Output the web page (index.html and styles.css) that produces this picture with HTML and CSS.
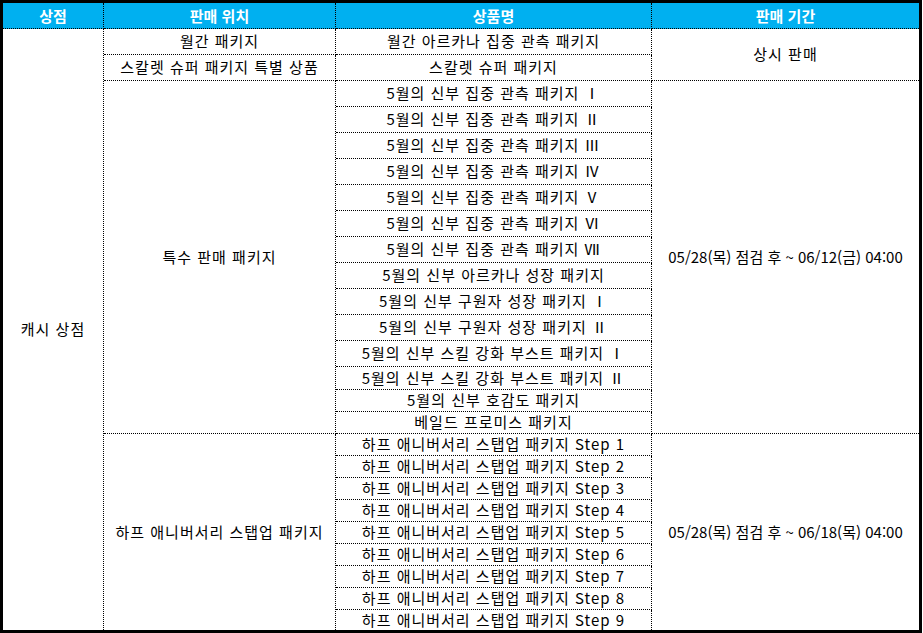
FILE: index.html
```html
<!DOCTYPE html>
<html lang="ko">
<head>
<meta charset="utf-8">
<title>판매 목록</title>
<link rel="stylesheet" href="styles.css">
</head>
<body>
<div class="sheet">
  <div class="cell head">상점</div>
  <div class="cell head">판매 위치</div>
  <div class="cell head">상품명</div>
  <div class="cell head c4">판매 기간</div>

  <div class="cell shop last">캐시 상점</div>

  <div class="cell loc-a">월간 패키지</div>
  <div class="cell">월간 아르카나 집중 관측 패키지</div>
  <div class="cell c4 per-a">상시 판매</div>

  <div class="cell loc-b">스칼렛 슈퍼 패키지 특별 상품</div>
  <div class="cell">스칼렛 슈퍼 패키지</div>

  <div class="cell loc-c">특수 판매 패키지</div>
  <div class="cell">5월의 신부 집중 관측 패키지 Ⅰ</div>
  <div class="cell c4 per-c date">05/28(목) 점검 후 ~ 06/12(금) 04:00</div>
  <div class="cell">5월의 신부 집중 관측 패키지 Ⅱ</div>
  <div class="cell">5월의 신부 집중 관측 패키지 Ⅲ</div>
  <div class="cell">5월의 신부 집중 관측 패키지 Ⅳ</div>
  <div class="cell">5월의 신부 집중 관측 패키지 Ⅴ</div>
  <div class="cell">5월의 신부 집중 관측 패키지 Ⅵ</div>
  <div class="cell">5월의 신부 집중 관측 패키지 Ⅶ</div>
  <div class="cell">5월의 신부 아르카나 성장 패키지</div>
  <div class="cell">5월의 신부 구원자 성장 패키지 Ⅰ</div>
  <div class="cell">5월의 신부 구원자 성장 패키지 Ⅱ</div>
  <div class="cell">5월의 신부 스킬 강화 부스트 패키지 Ⅰ</div>
  <div class="cell">5월의 신부 스킬 강화 부스트 패키지 Ⅱ</div>
  <div class="cell">5월의 신부 호감도 패키지</div>
  <div class="cell">베일드 프로미스 패키지</div>

  <div class="cell loc-d last">하프 애니버서리 스탭업 패키지</div>
  <div class="cell">하프 애니버서리 스탭업 패키지 Step 1</div>
  <div class="cell c4 per-d last date">05/28(목) 점검 후 ~ 06/18(목) 04:00</div>
  <div class="cell">하프 애니버서리 스탭업 패키지 Step 2</div>
  <div class="cell">하프 애니버서리 스탭업 패키지 Step 3</div>
  <div class="cell">하프 애니버서리 스탭업 패키지 Step 4</div>
  <div class="cell">하프 애니버서리 스탭업 패키지 Step 5</div>
  <div class="cell">하프 애니버서리 스탭업 패키지 Step 6</div>
  <div class="cell">하프 애니버서리 스탭업 패키지 Step 7</div>
  <div class="cell">하프 애니버서리 스탭업 패키지 Step 8</div>
  <div class="cell last">하프 애니버서리 스탭업 패키지 Step 9</div>
</div>
</body>
</html>
```

FILE: styles.css
```css
html, body {
  margin: 0;
  padding: 0;
  background: #ffffff;
}

.sheet {
  width: 922px;
  height: 633px;
  box-sizing: border-box;
  border: 3px solid #000;
  display: grid;
  grid-template-columns: 101px 232px 316px 267px;
  grid-template-rows: 26px repeat(13, 26px) 23px 22px 22px repeat(8, 22px) 20px;
  grid-auto-flow: row dense;
  font-family: "Noto Sans CJK KR", "Noto Sans", sans-serif;
  font-size: 15px;
  color: #000;
}

.cell {
  box-sizing: border-box;
  border-right: 1px dotted #000;
  border-bottom: 1px dotted #000;
  display: flex;
  align-items: center;
  justify-content: center;
  white-space: nowrap;
  line-height: 1;
  letter-spacing: 1px;
  padding-bottom: 2px;
  grid-column: 3;
}

.cell.last {
  border-bottom: none;
}

.cell.c4 {
  border-right: none;
  grid-column: 4;
}

.cell.date {
  letter-spacing: 0;
}

.head {
  background: #00b0f0;
  color: #ffffff;
  font-weight: bold;
  letter-spacing: 0;
  padding-bottom: 0;
  grid-row: 1;
  grid-column: auto;
}

.head:nth-child(1) { grid-column: 1; }
.head:nth-child(2) { grid-column: 2; }
.head:nth-child(3) { grid-column: 3; }

.shop {
  grid-column: 1;
  grid-row: 2 / span 25;
}

.loc-a { grid-column: 2; grid-row: 2; }
.loc-b { grid-column: 2; grid-row: 3; }
.loc-c { grid-column: 2; grid-row: 4 / span 14; }
.loc-d { grid-column: 2; grid-row: 18 / span 9; }

.per-a { grid-row: 2 / span 2; }
.per-c { grid-row: 4 / span 14; }
.per-d { grid-row: 18 / span 9; }
```
